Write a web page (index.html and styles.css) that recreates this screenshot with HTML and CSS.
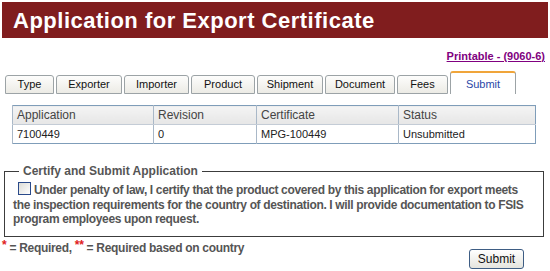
FILE: index.html
```html
<!DOCTYPE html>
<html>
<head>
<meta charset="utf-8">
<link rel="stylesheet" href="styles.css">
</head>
<body>
<div class="page">
  <div class="banner">Application for Export Certificate</div>
  <div class="linkrow"><a href="#" class="printable">Printable - (9060-6)</a></div>
  <div class="tabs">
    <div class="tab w-type">Type</div>
    <div class="tab w-exp">Exporter</div>
    <div class="tab w-imp">Importer</div>
    <div class="tab w-prod">Product</div>
    <div class="tab w-ship">Shipment</div>
    <div class="tab w-doc">Document</div>
    <div class="tab w-fees">Fees</div>
    <div class="tab active w-sub">Submit</div>
  </div>
  <table class="grid">
    <thead>
      <tr><th class="c1">Application</th><th class="c2">Revision</th><th class="c3">Certificate</th><th class="c4">Status</th></tr>
    </thead>
    <tbody>
      <tr><td>7100449</td><td>0</td><td>MPG-100449</td><td>Unsubmitted</td></tr>
    </tbody>
  </table>
  <fieldset class="certify">
    <legend>Certify and Submit Application</legend>
    <p class="stmt"><span class="check"></span>Under penalty of law, I certify that the product covered by this application for export meets the inspection requirements for the country of destination. I will provide documentation to FSIS program employees upon request.</p>
  </fieldset>
  <div class="bottom">
    <div class="req"><span class="star">*</span> = Required, <span class="star">**</span> = Required based on country</div>
    <button class="submit">Submit</button>
  </div>
</div>
</body>
</html>
```
FILE: styles.css
```css
html, body { margin: 0; padding: 0; background: #fff; }
body { font-family: "Liberation Sans", Arial, sans-serif; width: 550px; height: 271px; overflow: hidden; }
.page { padding-top: 2px; }
.banner {
  margin: 0 2px;
  height: 36px;
  background: #801d1e;
  color: #fff;
  font-weight: bold;
  font-size: 22px;
  line-height: 37px;
  padding-left: 11px;
  letter-spacing: 0.5px;
}
.linkrow { text-align: right; padding-right: 5px; height: 22px; padding-top: 8px; box-sizing: border-box; }
.printable { color: #800080; font-weight: bold; font-size: 11px; text-decoration: underline; }
.tabs { display: flex; align-items: flex-end; gap: 2px; margin: 11px 0 0 5px; height: 23px; }
.tab {
  box-sizing: border-box;
  height: 19px;
  border: 1px solid #9ca3a6;
  border-radius: 3px 3px 0 0;
  background: linear-gradient(#fdfdfc, #ecebe5);
  font-size: 11px;
  color: #111;
  text-align: center;
  line-height: 17px;
}
.tab.active {
  height: 23px;
  background: #fff;
  border-top: 2px solid #f0a53a;
  border-bottom: none;
  color: #2a48a8;
  line-height: 22px;
}
.w-type { width: 49px; }
.w-exp { width: 66px; }
.w-imp { width: 65px; }
.w-prod { width: 64px; }
.w-ship { width: 66px; }
.w-doc { width: 70px; }
.w-fees { width: 51px; }
.w-sub { width: 66px; }
.grid {
  margin: 11px 0 0 12px;
  width: 524px;
  border-collapse: collapse;
  border: 1px solid #7f9db9;
  font-size: 11px;
  color: #222;
}
.grid th {
  text-align: left;
  font-weight: normal;
  font-size: 12px;
  color: #444;
  height: 18px;
  padding: 0 4px;
  background: linear-gradient(#f4f4f4, #e6e6e6);
  border-left: 1px solid #a9b8c8;
  border-bottom: 1px solid #c4ccd6;
}
.grid td {
  height: 18px;
  padding: 0 4px;
  border-left: 1px solid #a9b8c8;
}
.c1 { width: 132px; }
.c2 { width: 94px; }
.c3 { width: 133px; }
.certify {
  margin: 20px 6px 0 4px;
  padding: 0 8px 9px 8px;
  border: 1px solid #3c3c3c;
}
.certify legend {
  font-weight: bold;
  font-size: 12px;
  color: #555;
  padding: 0 4px;
  margin-left: 6px;
}
.stmt {
  margin: 4px 0 0 0;
  font-weight: bold;
  font-size: 12px;
  line-height: 14.5px;
  color: #555;
  letter-spacing: -0.35px;
}
.check {
  display: inline-block;
  width: 11px;
  height: 11px;
  border: 1px solid #2a4a8a;
  background: linear-gradient(135deg, #dcdcd6, #fff);
  margin: 0 3px 0 5px;
  vertical-align: -1px;
}
.bottom { display: flex; justify-content: space-between; align-items: flex-start; padding: 1px 26px 0 2px; }
.req { font-weight: bold; font-size: 12px; color: #555; letter-spacing: -0.3px; }
.star { color: #e02020; vertical-align: 3px; font-size: 12px; }
.submit {
  margin-top: 11px;
  width: 55px;
  height: 20px;
  border: 1px solid #3e5d84;
  border-radius: 3px;
  background: linear-gradient(#fff, #e4e4de);
  font-family: "Liberation Sans", Arial, sans-serif;
  font-size: 12px;
  color: #111;
  padding: 0;
}
```
